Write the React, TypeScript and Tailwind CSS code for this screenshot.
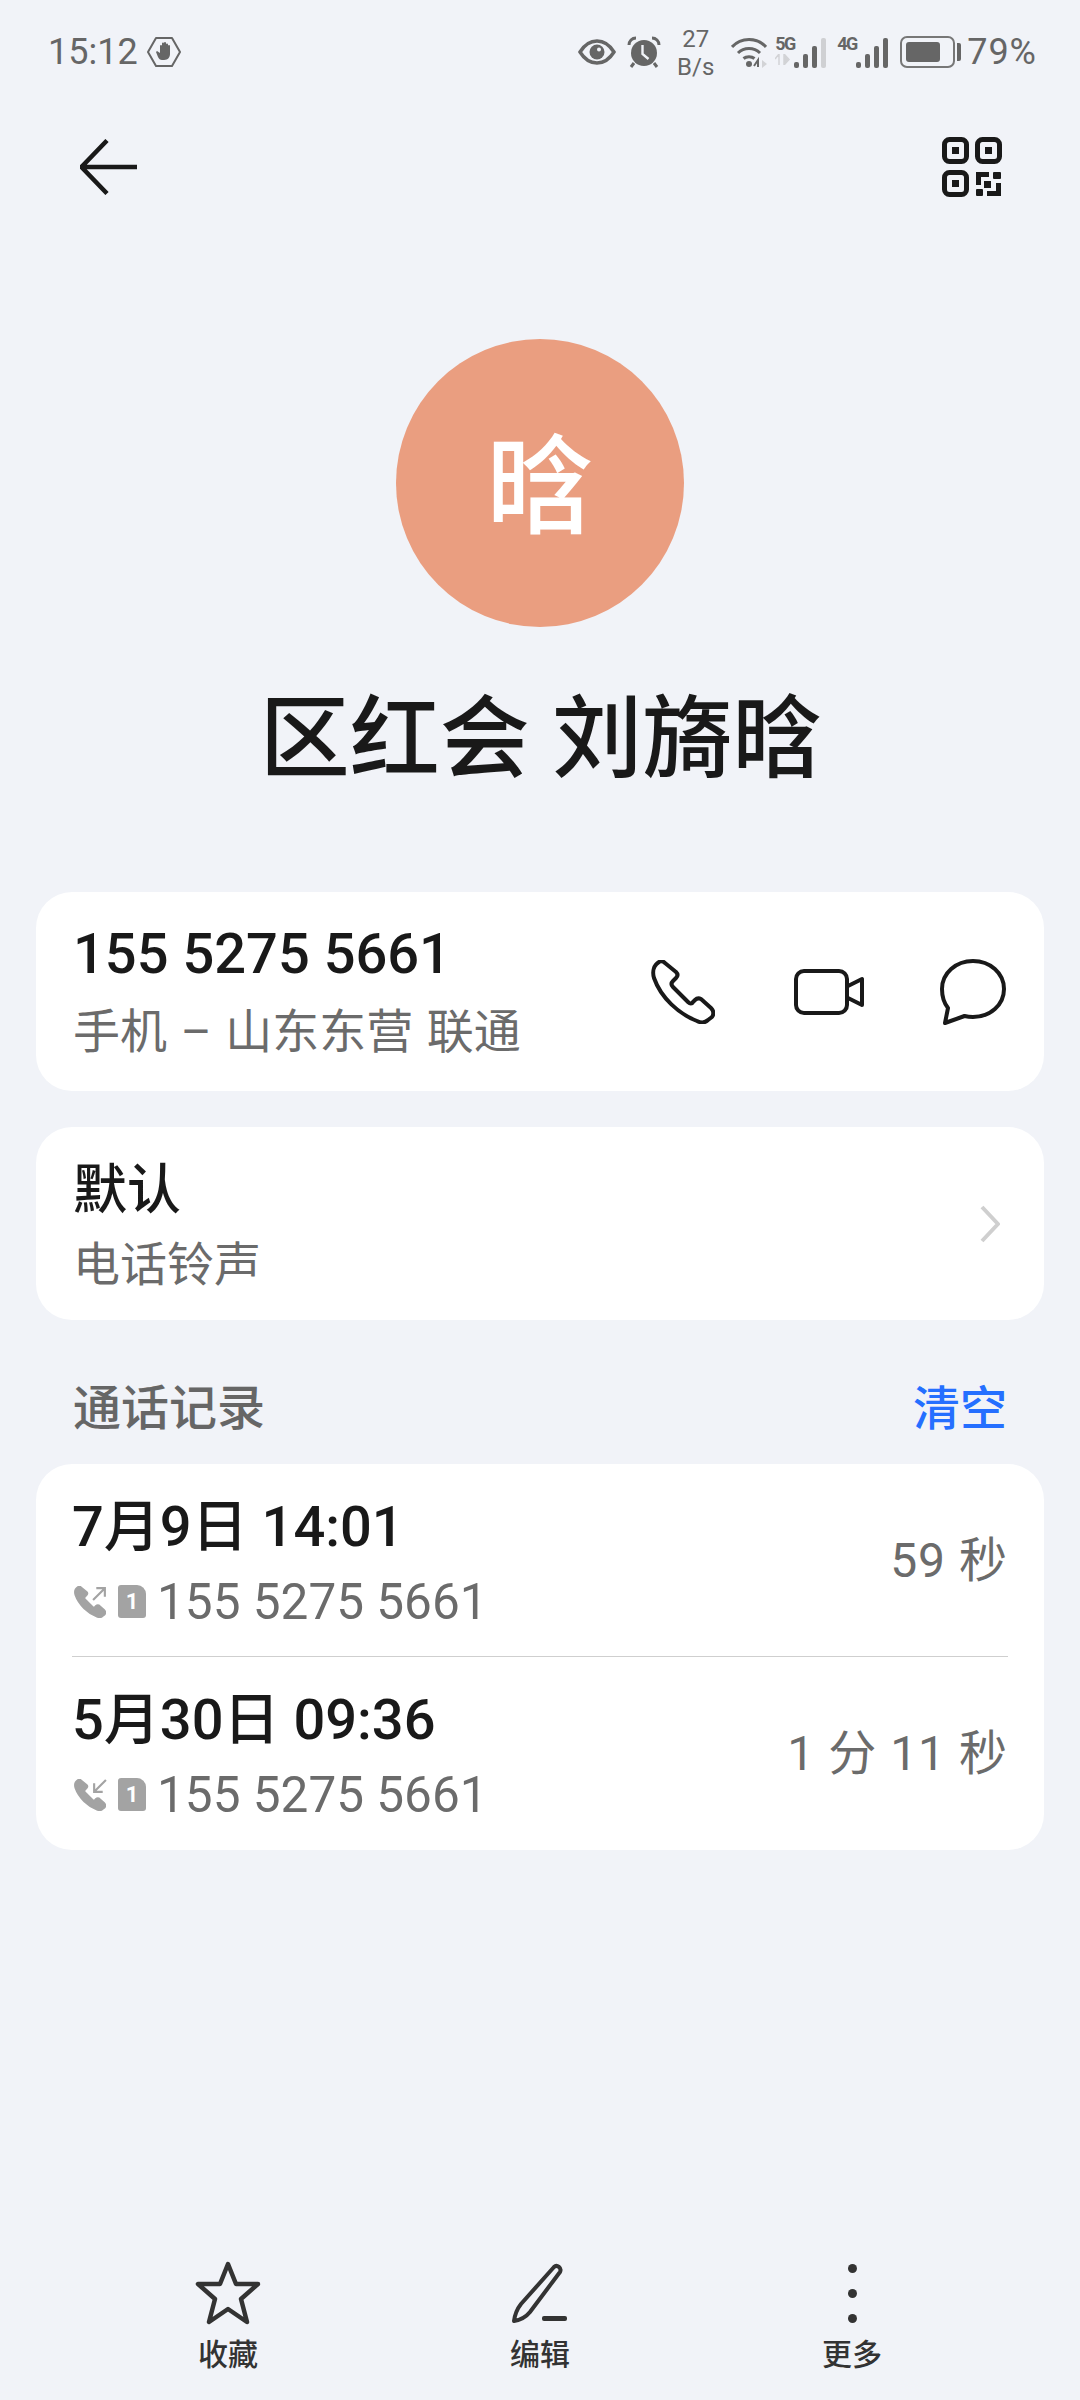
const fontStack = "font-['Roboto','Noto_Sans_CJK_SC',sans-serif]"

function HandBadge() {
  return (
    <svg width="34" height="32" viewBox="0 0 34 32" className="ml-[9px]">
      <path d="M9 2h16l8 14-8 14H9L1 16z" fill="none" stroke="#666" strokeWidth="2" strokeLinejoin="round" />
      <path d="M9 16l1-1 3 2V10a1 1 0 0 1 2 0V7.500a1 1 0 0 1 2 0V7a1 1 0 0 1 2 0v1.500a1 1 0 0 1 2 0v1.500a1 1 0 0 1 2 0v8c0 3-2 6-6 6h-2c-2 0-3-1-4-3z" fill="#666" />
    </svg>
  )
}

function Signal({ label, dim }: { label: string; dim?: boolean }) {
  const bars = [6, 14, 22, 30]
  return (
    <div className="flex items-end h-[32px] relative">
      <div className="flex flex-col w-[18px] mr-[1px] self-start">
        <span className="text-[18px] leading-[15px] font-bold text-[#666] tracking-[-1.500px]">{label}</span>
        {dim && (
          <svg width="16" height="11" viewBox="0 0 16 11" className="mt-[3px]">
            <path d="M4 0v11M4 0L0 5M9 0v11l5-5.500z" fill="#d2d3d6" stroke="#d2d3d6" strokeWidth="1.500" />
          </svg>
        )}
      </div>
      <div className="flex items-end gap-[4px]">
        {bars.map((h, i) => (
          <div
            key={i}
            className={`w-[5px] rounded-[2px] ${dim && i === 3 ? "bg-[#cfd0d3]" : "bg-[#666]"}`}
            style={{ height: h }}
          />
        ))}
      </div>
    </div>
  )
}

function StatusBar() {
  return (
    <div className={`h-[104px] flex items-center justify-between pl-[48px] pr-[43px] text-[#666] ${fontStack}`}>
      <div className="flex items-center">
        <span className="text-[36px] leading-none">15:12</span>
        <HandBadge />
      </div>
      <div className="flex items-center">
        <svg width="38" height="26" viewBox="0 0 38 26">
          <path d="M2 13C7 5 12 2 19 2s12 3 17 11c-5 8-10 11-17 11S7 21 2 13z" fill="none" stroke="#666" strokeWidth="3.500" />
          <circle cx="19" cy="13" r="7.500" fill="#666" />
          <circle cx="21" cy="10.500" r="2" fill="#f1f3f8" />
        </svg>
        <svg width="34" height="32" viewBox="0 0 34 32" className="ml-[11px]">
          <circle cx="17" cy="17" r="13" fill="#666" />
          <path d="M15.500 9v9l6 5" fill="none" stroke="#f1f3f8" strokeWidth="2.400" />
          <path d="M2 9c0-4 3-7 7-7M32 9c0-4-3-7-7-7" fill="none" stroke="#666" strokeWidth="3" />
          <path d="M7 27l-3 4M27 27l3 4" stroke="#666" strokeWidth="3" />
        </svg>
        <div className="ml-[16px] w-[37px] flex flex-col items-center text-[24px] leading-[28px] mt-[2px]">
          <span>27</span>
          <span>B/s</span>
        </div>
        <svg width="36" height="32" viewBox="0 0 36 32" className="ml-[17px]">
          <path d="M1 11C10 1 26 1 35 11M7 17c6-6 16-6 22 0M12.500 22.500c3-2.500 8-2.500 11 0" fill="none" stroke="#666" strokeWidth="3" />
          <circle cx="18" cy="28" r="3" fill="#666" />
          <path d="M27 31v-7l-4 6" fill="none" stroke="#666" strokeWidth="2" />
          <path d="M31 24l5 4-5 4z" fill="#d2d3d6" />
        </svg>
        <div className="ml-[8px]">
          <Signal label="5G" dim />
        </div>
        <div className="ml-[11px]">
          <Signal label="4G" />
        </div>
        <div className="ml-[12px] flex items-center">
          <div className="w-[55px] h-[32px] rounded-[7px] border-[2px] border-[#777] p-[4px]">
            <div className="h-full w-[34px] rounded-[3px] bg-[#666]" />
          </div>
          <div className="ml-[2px] w-[4px] h-[18px] rounded-r-[2px] bg-[#666]" />
        </div>
        <span className="ml-[6px] text-[36px] leading-none tracking-[1px]">79%</span>
      </div>
    </div>
  )
}

function NavBar() {
  return (
    <div className="h-[126px] flex items-center justify-between pl-[80px] pr-[78px]">
      <svg width="58" height="56" viewBox="0 0 58 56">
        <path d="M27 1.500L1.500 28 27 54.500M2 28h55" fill="none" stroke="#191919" strokeWidth="4.500" strokeLinejoin="round" />
      </svg>
      <svg width="60" height="60" viewBox="0 0 60 60">
        <g fill="none" stroke="#191919" strokeWidth="5">
          <rect x="2.500" y="2.500" width="22" height="22" rx="5" />
          <rect x="35.500" y="2.500" width="22" height="22" rx="5" />
          <rect x="2.500" y="35.500" width="22" height="22" rx="5" />
        </g>
        <g fill="#191919">
          <rect x="10" y="10" width="7" height="7" />
          <rect x="43" y="10" width="7" height="7" />
          <rect x="10" y="43" width="7" height="7" />
          <path d="M34 35h13v5h-8v8h-5z" />
          <rect x="51" y="35" width="8" height="7" rx="1" />
          <rect x="42" y="44" width="7" height="7" />
          <rect x="34" y="52" width="7" height="7" rx="1" />
          <path d="M54 46h5v13H45v-5h9z" />
        </g>
      </svg>
    </div>
  )
}

const handsetPath =
  "M3 18C1 11 3 5 8 2c2-1.500 4-1 6 1l11 9c2 2 2 4 0 6l-3 3c-2 2-2 4 0 6l15 15c2 2 4 2 5 0l2-2c2-2 4-2 6-1l10 9c3 3 3 6 1 9l-4 3c-3 3-7 3-11 1C28 54 10 38 3 18z"

function CardPhoneIcon() {
  return (
    <svg width="64" height="64" viewBox="0 0 64 64">
      <path d={handsetPath} fill="none" stroke="#191919" strokeWidth="4" strokeLinejoin="round" />
    </svg>
  )
}

function ContactCard() {
  return (
    <div className="h-[199px] rounded-[36px] bg-white flex items-center justify-between pl-[37px] pr-[38px]">
      <div className="flex flex-col">
        <span className="mt-[-2px] text-[56px] leading-[64px] font-medium text-[#191919]">155 5275 5661</span>
        <span className="mt-[18px] text-[47px] leading-[56px] text-[#6b6b6b] [word-spacing:2px]">手机 – 山东东营 联通</span>
      </div>
      <div className="flex items-center">
        <CardPhoneIcon />
        <svg width="70" height="46" viewBox="0 0 70 46" className="ml-[79px]">
          <rect x="2" y="2" width="51" height="42" rx="8" fill="none" stroke="#191919" strokeWidth="4" />
          <path d="M54 17l14-7v26l-14-7" fill="none" stroke="#191919" strokeWidth="4" strokeLinejoin="round" />
        </svg>
        <svg width="66" height="66" viewBox="0 0 66 66" className="ml-[76px]">
          <path
            d="M33 2c17 0 31 12 31 28S50 58 33 58c-3 0-6-.4-8.500-1L5 64l3-15C4 44 2 37 2 30 2 14 16 2 33 2z"
            fill="none"
            stroke="#191919"
            strokeWidth="4"
            strokeLinejoin="round"
          />
        </svg>
      </div>
    </div>
  )
}

function RingtoneCard() {
  return (
    <div className="mt-[36px] h-[193px] rounded-[36px] bg-white flex items-center justify-between pl-[37px] pr-[44px]">
      <div className="flex flex-col pt-[6px]">
        <span className="text-[54px] leading-[62px] font-medium text-[#191919]">默认</span>
        <span className="mt-[15px] text-[47px] leading-[56px] text-[#6b6b6b]">电话铃声</span>
      </div>
      <svg width="20" height="38" viewBox="0 0 20 38">
        <path d="M2 2l16 17L2 36" fill="none" stroke="#cfcfcf" strokeWidth="4" strokeLinejoin="round" />
      </svg>
    </div>
  )
}

function CallRow({
  time,
  duration,
  incoming,
}: {
  time: string
  duration: string
  incoming?: boolean
}) {
  return (
    <div className="flex-1 flex items-center justify-between">
      <div className="flex flex-col pt-[2px]">
        <span className="text-[56px] leading-[64px] font-medium text-[#191919]">{time}</span>
        <div className="mt-[17px] flex items-center h-[52px]">
          <div className="relative w-[32px] h-[32px] ml-[2px]">
            <svg width="32" height="32" viewBox="0 0 64 64">
              <path d={handsetPath} fill="#a3a3a3" stroke="#a3a3a3" strokeWidth="4" />
            </svg>
            <svg width="15" height="15" viewBox="0 0 14 14" className="absolute top-0 right-[-1px]">
              {incoming ? (
                <path d="M13 1L2 12M2 4v8h8" fill="none" stroke="#a3a3a3" strokeWidth="2" />
              ) : (
                <path d="M1 13L12 2M4 2h8v8" fill="none" stroke="#a3a3a3" strokeWidth="2" />
              )}
            </svg>
          </div>
          <div className="ml-[12px] w-[28px] h-[33px] bg-[#a3a3a3] rounded-[3px] rounded-tr-[9px] flex items-center justify-center text-white text-[22px] font-bold leading-none">
            1
          </div>
          <span className="ml-[11px] text-[49.500px] leading-[52px] text-[#6b6b6b]">155 5275 5661</span>
        </div>
      </div>
      <span className="pt-[2px] text-[48px] text-[#6b6b6b] tracking-[1px]">{duration}</span>
    </div>
  )
}

function CallLog() {
  return (
    <div className="h-[386px] rounded-[36px] bg-white flex flex-col px-[36px] pb-[1px]">
      <CallRow time="7月9日 14:01" duration="59 秒" />
      <div className="h-[1px] bg-[#cfcfcf]" />
      <CallRow time="5月30日 09:36" duration="1 分 11 秒" incoming />
    </div>
  )
}

function BottomAction({ label, children }: { label: string; children: React.ReactNode }) {
  return (
    <div className="w-[312px] flex flex-col items-center">
      <div className="h-[68px] flex items-center justify-center">{children}</div>
      <span className="mt-[8px] text-[30px] leading-[40px] font-medium text-[#333]">{label}</span>
    </div>
  )
}

function BottomBar() {
  return (
    <div className="mt-auto mb-[25px] flex justify-center">
      <BottomAction label="收藏">
        <svg width="66" height="64" viewBox="0 0 66 64">
          <path
            d="M33 3l8 20h22L46 38l6 23-19-13-19 13 6-23L3 23h22z"
            fill="none"
            stroke="#333"
            strokeWidth="4.500"
            strokeLinejoin="round"
          />
        </svg>
      </BottomAction>
      <BottomAction label="编辑">
        <svg width="60" height="60" viewBox="0 0 60 60">
          <path
            d="M44 4c3-3 8 1 6 5L20 49c-4 5-10 8-16 9 1-7 3-12 7-17z"
            fill="none"
            stroke="#333"
            strokeWidth="4"
            strokeLinejoin="round"
          />
          <rect x="32" y="53" width="25" height="5" rx="2" fill="#333" />
        </svg>
      </BottomAction>
      <BottomAction label="更多">
        <div className="flex flex-col gap-[16px]">
          <div className="w-[9px] h-[9px] rounded-full bg-[#333]" />
          <div className="w-[9px] h-[9px] rounded-full bg-[#333]" />
          <div className="w-[9px] h-[9px] rounded-full bg-[#333]" />
        </div>
      </BottomAction>
    </div>
  )
}

export default function App() {
  return (
    <div className={`w-[1080px] h-[2400px] bg-[#f1f3f8] flex flex-col ${fontStack}`}>
      <StatusBar />
      <NavBar />
      <div className="mt-[109px] flex flex-col items-center">
        <div className="w-[288px] h-[288px] rounded-full bg-[#ea9e80] flex items-center justify-center pt-[10px] text-white text-[108px] font-medium leading-none">
          晗
        </div>
        <h1 className="mt-[53px] ml-[2px] text-[90px] leading-[120px] font-medium text-[#191919]">区红会 刘旖晗</h1>
      </div>
      <div className="mt-[92px] px-[36px] flex flex-col">
        <ContactCard />
        <RingtoneCard />
        <div className="h-[144px] pt-[58px] pb-[24px] px-[37px] flex items-center justify-between">
          <span className="text-[48px] font-medium text-[#666]">通话记录</span>
          <span className="text-[47px] font-medium text-[#256fff]">清空</span>
        </div>
        <CallLog />
      </div>
      <BottomBar />
    </div>
  )
}
